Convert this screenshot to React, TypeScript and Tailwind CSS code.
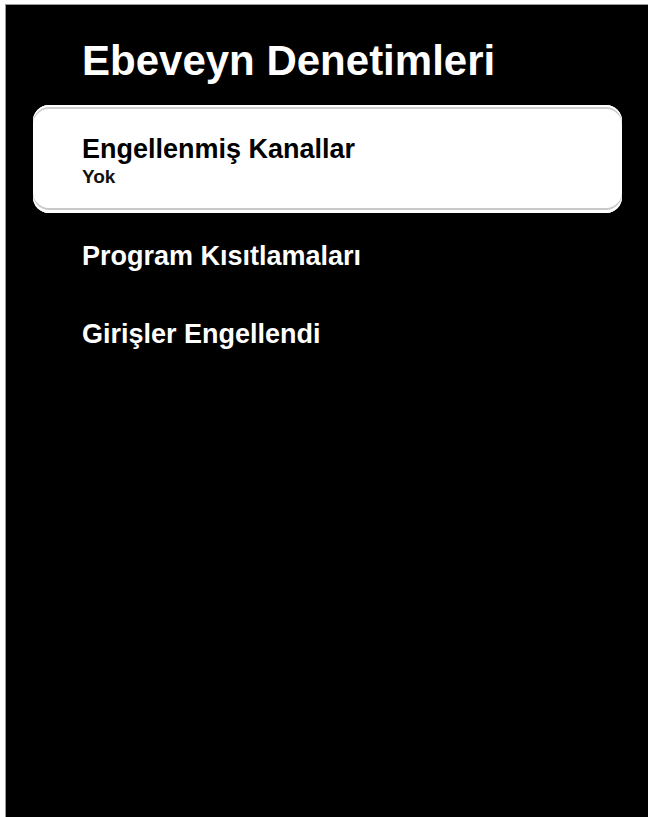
const items = ["Program Kısıtlamaları", "Girişler Engellendi"];

export default function App() {
  return (
    <div
      className="h-[817px] w-[648px] overflow-hidden bg-white pl-[5px] pt-[4px]"
      style={{ fontFamily: '"Liberation Sans", Arial, sans-serif' }}
    >
      <div className="h-full border-l border-t border-[#9a9a9a] bg-black pt-[35px]">
        <h1 className="pl-[76px] text-[42px] font-bold leading-[42px] text-white">
          Ebeveyn Denetimleri
        </h1>

        <div className="ml-[27px] mr-[26px] mt-[23px] rounded-[16px] bg-white pb-[27px] pl-[49px] pt-[31px] shadow-[inset_0_2px_0_#ffffff,inset_0_4px_0_#cfcfcf,inset_0_-3px_0_#ffffff,inset_0_-5px_0_#c9c9c9]">
          <p className="text-[27px] font-bold leading-[27px] text-black">
            Engellenmiş Kanallar
          </p>
          <p className="mt-[4px] text-[19px] font-bold leading-[19px] text-[#111]">
            Yok
          </p>
        </div>

        <div className="mt-[30px] flex flex-col gap-[51px] pl-[76px]">
          {items.map((label) => (
            <p
              key={label}
              className="text-[27px] font-bold leading-[27px] text-white"
            >
              {label}
            </p>
          ))}
        </div>
      </div>
    </div>
  );
}
